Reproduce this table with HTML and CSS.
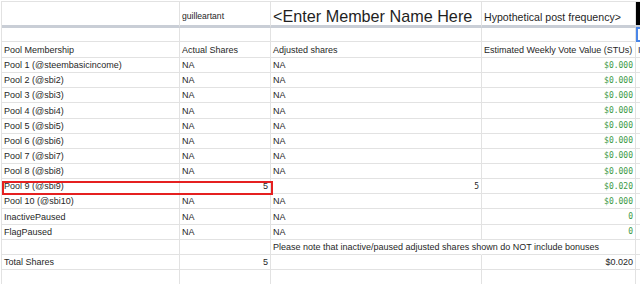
FILE: index.html
```html
<!DOCTYPE html>
<html>
<head>
<meta charset="utf-8">
<link rel="stylesheet" href="styles.css">
</head>
<body>
<div class="sheet">
  <div class="c r1"></div>
  <div class="c r1 small">guilleartant</div>
  <div class="c r1 big">&lt;Enter Member Name Here</div>
  <div class="c r1 mid">Hypothetical post frequency&gt;</div>
  <div class="c r1 black"></div>

  <div class="c"></div>
  <div class="c"></div>
  <div class="c"></div>
  <div class="c"></div>
  <div class="c sel"><span class="selbox"></span></div>

  <div class="c">Pool Membership</div>
  <div class="c">Actual Shares</div>
  <div class="c">Adjusted shares</div>
  <div class="c">Estimated Weekly Vote Value (STUs)</div>
  <div class="c">I</div>

  <div class="c">Pool 1 (@steembasicincome)</div><div class="c">NA</div><div class="c">NA</div><div class="c r mono g">$0.000</div><div class="c"></div>
  <div class="c">Pool 2 (@sbi2)</div><div class="c">NA</div><div class="c">NA</div><div class="c r mono g">$0.000</div><div class="c"></div>
  <div class="c">Pool 3 (@sbi3)</div><div class="c">NA</div><div class="c">NA</div><div class="c r mono g">$0.000</div><div class="c"></div>
  <div class="c">Pool 4 (@sbi4)</div><div class="c">NA</div><div class="c">NA</div><div class="c r mono g">$0.000</div><div class="c"></div>
  <div class="c">Pool 5 (@sbi5)</div><div class="c">NA</div><div class="c">NA</div><div class="c r mono g">$0.000</div><div class="c"></div>
  <div class="c">Pool 6 (@sbi6)</div><div class="c">NA</div><div class="c">NA</div><div class="c r mono g">$0.000</div><div class="c"></div>
  <div class="c">Pool 7 (@sbi7)</div><div class="c">NA</div><div class="c">NA</div><div class="c r mono g">$0.000</div><div class="c"></div>
  <div class="c">Pool 8 (@sbi8)</div><div class="c">NA</div><div class="c">NA</div><div class="c r mono g">$0.000</div><div class="c"></div>
  <div class="c hl">Pool 9 (@sbi9)<span class="redbox"></span></div><div class="c r">5</div><div class="c r mono">5</div><div class="c r mono g">$0.020</div><div class="c"></div>
  <div class="c">Pool 10 (@sbi10)</div><div class="c">NA</div><div class="c">NA</div><div class="c r mono g">$0.000</div><div class="c"></div>
  <div class="c">InactivePaused</div><div class="c">NA</div><div class="c">NA</div><div class="c r mono g">0</div><div class="c"></div>
  <div class="c">FlagPaused</div><div class="c">NA</div><div class="c">NA</div><div class="c r mono g">0</div><div class="c"></div>
  <div class="c"></div><div class="c"></div><div class="c note">Please note that inactive/paused adjusted shares shown do NOT include bonuses</div><div class="c"></div><div class="c"></div>
  <div class="c">Total Shares</div><div class="c r">5</div><div class="c"></div><div class="c r">$0.020</div><div class="c"></div>
  <div class="c"></div><div class="c"></div><div class="c"></div><div class="c"></div><div class="c"></div>
</div>
</body>
</html>
```

FILE: styles.css
```css
html, body {
  margin: 0;
  padding: 0;
  background: #ffffff;
  overflow: hidden;
}
body {
  width: 640px;
  height: 284px;
  padding-top: 1px;
  padding-left: 1px;
  box-sizing: border-box;
}
.sheet {
  display: grid;
  grid-template-columns: 178px 91px 211px 154px 1fr;
  grid-template-rows: 26px 14px 16px repeat(15, 15.15px);
  width: 639px;
  border-left: 1px solid #e2e2e2;
  border-top: 1px solid #e2e2e2;
  box-sizing: border-box;
  font-family: "Liberation Sans", Arial, sans-serif;
  font-size: 9px;
  color: #1f1f1f;
}
.c {
  box-sizing: border-box;
  border-right: 1px solid #e2e2e2;
  border-bottom: 1px solid #e2e2e2;
  display: flex;
  align-items: flex-end;
  padding: 0 2px 1px 2px;
  line-height: 11px;
  white-space: nowrap;
  overflow: hidden;
  position: relative;
  min-width: 0;
}
.r1 {
  border-bottom: 3px solid #c9ced6;
}
.small {
  font-size: 8.6px;
  padding-bottom: 3px;
}
.big {
  font-size: 16.2px;
  line-height: 18px;
  padding-bottom: 0;
}
.mid {
  font-size: 10.6px;
  line-height: 13px;
  padding-bottom: 1.5px;
}
.black {
  background: #000000;
}
.sel {
  overflow: visible;
}
.selbox {
  position: absolute;
  left: 0;
  top: -1px;
  width: 40px;
  height: 15px;
  border: 2px solid #4a86e8;
  box-sizing: border-box;
}
.r {
  justify-content: flex-end;
}
.mono {
  font-family: "DejaVu Sans Mono", "Liberation Mono", monospace;
  font-size: 8px;
  padding-bottom: 1.5px;
}
.g {
  color: #3c9a46;
}
.hl {
  overflow: visible;
  z-index: 2;
}
.redbox {
  position: absolute;
  left: 0;
  top: 1.5px;
  width: 271px;
  height: 14px;
  border: 2px solid #e52020;
  box-sizing: border-box;
}
.note {
  overflow: visible;
  border-right-color: transparent;
  z-index: 1;
}
```
